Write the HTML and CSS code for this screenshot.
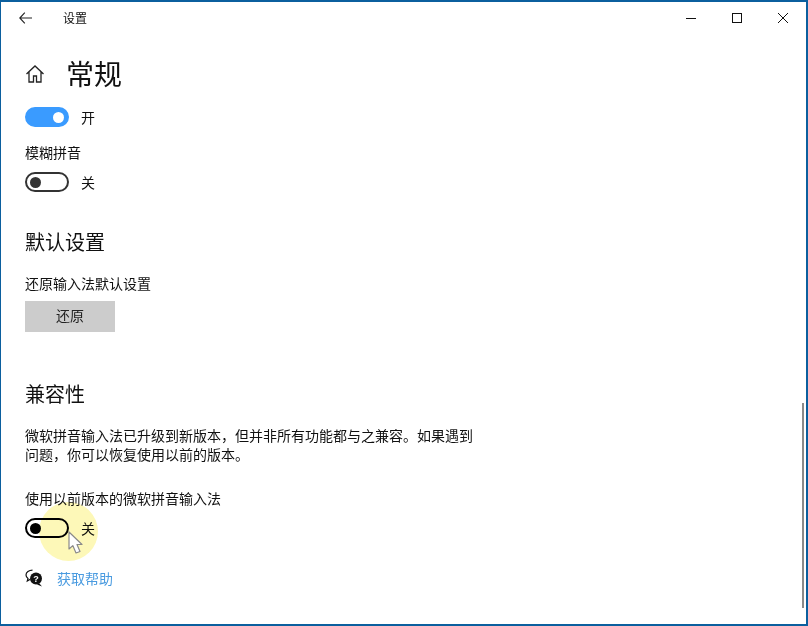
FILE: index.html
```html
<!DOCTYPE html>
<html lang="zh-CN">
<head>
<meta charset="utf-8">
<title>设置</title>
<link rel="stylesheet" href="styles.css">
</head>
<body>
<div class="window">
  <header class="titlebar">
    <svg class="back" width="13" height="12" viewBox="0 0 13 12"><path d="M5.800.7.800 6l5 5.300M.8 6H13" fill="none" stroke="#222" stroke-width="1.100"/></svg>
    <span class="title">设置</span>
    <div class="controls">
      <svg class="ctl" width="46" height="12" viewBox="0 0 46 12"><path d="M18 6.500h10" stroke="#111" stroke-width="1"/></svg>
      <svg class="ctl" width="46" height="12" viewBox="0 0 46 12"><rect x="18.500" y="1.500" width="9" height="9" fill="none" stroke="#111"/></svg>
      <svg class="ctl" width="46" height="12" viewBox="0 0 46 12"><path d="M18 1l10 10M28 1 18 11" stroke="#111" stroke-width="1"/></svg>
    </div>
  </header>
  <main class="content">
    <div class="heading">
      <svg class="home" width="20" height="20" viewBox="0 0 20 20"><path d="M1.500 10 10 2l8.500 8M4 8v10h4.500v-6h3v6H16V8" fill="none" stroke="#222" stroke-width="1.300"/></svg>
      <h1>常规</h1>
    </div>
    <div class="toggle-row first">
      <span class="switch on"><i></i></span><span class="state">开</span>
    </div>
    <div class="label fuzzy">模糊拼音</div>
    <div class="toggle-row">
      <span class="switch"><i></i></span><span class="state">关</span>
    </div>
    <h2 class="default">默认设置</h2>
    <div class="label restore">还原输入法默认设置</div>
    <button class="btn">还原</button>
    <h2 class="compat">兼容性</h2>
    <p class="desc">微软拼音输入法已升级到新版本，但并非所有功能都与之兼容。如果遇到问题，你可以恢复使用以前的版本。</p>
    <div class="label legacy">使用以前版本的微软拼音输入法</div>
    <div class="toggle-row hover">
      <span class="switch dark"><i></i></span><span class="state">关</span>
      <span class="halo"></span>
      <svg class="cursor" width="15" height="24" viewBox="0 0 15 24"><path d="M1 1v17l3.800-3.400L8 22l4-1.500-3-7h5z" fill="#fff" stroke="#8a8a8a" stroke-width="1.200" stroke-linejoin="round"/></svg>
    </div>
    <div class="help">
      <svg width="18" height="18" viewBox="0 0 18 18">
        <path d="M7.500 1.200C4 1.200 1 3.300 1 6c0 1.500.8 2.600 2 3.400L2.300 12l3-1.800" fill="none" stroke="#111" stroke-width="1.200"/>
        <circle cx="11" cy="9.500" r="6" fill="#111"/>
        <path d="m14 14 3 3.500-5-2z" fill="#111"/>
        <text x="11" y="13" class="q">?</text>
      </svg>
      <a href="#">获取帮助</a>
    </div>
  </main>
  <div class="scrollbar"><span></span></div>
</div>
</body>
</html>
```
FILE: styles.css
```css
* { box-sizing: border-box; }
html, body { margin: 0; height: 100%; }
body {
  font-family: "Noto Sans CJK SC", "Noto Sans", sans-serif;
  color: #111;
  background: #fff;
}
.window {
  position: relative;
  width: 808px;
  height: 626px;
  background: #fff;
  border: 2px solid #0b5f9e;
  border-left-width: 1px;
  overflow: hidden;
}
.titlebar {
  display: flex;
  align-items: center;
  height: 32px;
  padding-left: 18px;
}
.back { flex: none; }
.title { margin-left: 31px; font-size: 12px; line-height: 32px; }
.controls { margin-left: auto; display: flex; }
.ctl { display: block; }
.content { padding: 0 0 0 24px; width: 480px; }
.heading { display: flex; align-items: center; height: 50px; margin-top: 15px; }
.heading h1 { margin: -2px 0 0 22px; font-size: 28px; font-weight: 400; line-height: 50px; transform: translateX(-1px); }
.toggle-row { position: relative; display: flex; align-items: center; height: 20px; }
.toggle-row.first { margin-top: 8px; }
.switch {
  flex: none;
  display: flex;
  align-items: center;
  width: 44px;
  height: 20px;
  padding-left: 3px;
  border: 2px solid #333;
  border-radius: 10px;
  position: relative;
}
.switch i { width: 11px; height: 11px; border-radius: 50%; background: #333; }
.switch.on { background: #3a9bff; border-color: #3a9bff; justify-content: flex-end; padding: 0 3px 0 0; }
.switch.on i { background: #fff; }
.switch.dark { border-color: #000; }
.switch.dark i { background: #000; }
.state { margin-left: 12px; font-size: 14px; line-height: 20px; position: relative; }
.label { font-size: 14px; line-height: 20px; }
.fuzzy { margin-top: 15px; margin-bottom: 10px; }
h2 { margin: 0; font-size: 20px; font-weight: 400; line-height: 28px; }
.default { margin-top: 36px; }
.restore { margin-top: 17px; }
.btn {
  display: block;
  width: 90px;
  height: 31px;
  margin-top: 8px;
  padding: 0 0 3px;
  border: 0;
  background: #ccc;
  color: #222;
  font: inherit;
  font-size: 14px;
}
.compat { margin-top: 48px; }
.desc { margin: 18px 0 0; font-size: 14px; line-height: 19px; width: 450px; }
.legacy { margin-top: 24px; margin-bottom: 10px; }
.halo {
  position: absolute;
  left: 14px;
  top: -16px;
  width: 59px;
  height: 59px;
  border-radius: 50%;
  background: #fdf8b8;
  mix-blend-mode: multiply;
}
.cursor { position: absolute; left: 43px; top: 13px; }
.help { display: flex; align-items: center; margin-top: 30px; height: 20px; }
.help a { margin-left: 14px; font-size: 14px; color: #4a9be0; text-decoration: none; }
.q { fill: #fff; font-size: 9px; font-weight: 700; text-anchor: middle; font-family: "Liberation Sans", sans-serif; }
.scrollbar { position: absolute; right: 2px; top: 401px; width: 2px; height: 205px; }
.scrollbar span { display: block; width: 100%; height: 100%; background: #8a8a8a; }
```
